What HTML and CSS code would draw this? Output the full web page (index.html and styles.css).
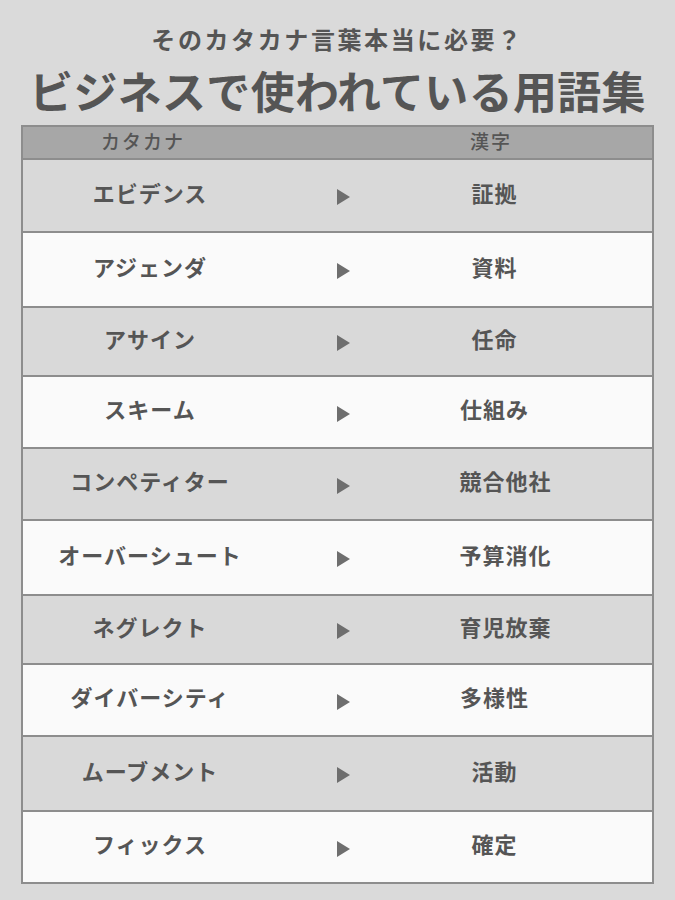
FILE: index.html
```html
<!DOCTYPE html>
<html lang="ja">
<head>
<meta charset="utf-8">
<link rel="stylesheet" href="styles.css">
</head>
<body>
<div class="page">
  <p class="sub">そのカタカナ言葉本当に必要？</p>
  <h1 class="title">ビジネスで使われている用語集</h1>
  <div class="table">
    <div class="head">
      <span class="h-kata">カタカナ</span>
      <span class="h-kanji">漢字</span>
    </div>
    <div class="row gray"><span class="kata">エビデンス</span><span class="arrow"></span><span class="kanji">証拠</span></div>
    <div class="row white"><span class="kata">アジェンダ</span><span class="arrow"></span><span class="kanji">資料</span></div>
    <div class="row gray"><span class="kata">アサイン</span><span class="arrow"></span><span class="kanji">任命</span></div>
    <div class="row white"><span class="kata">スキーム</span><span class="arrow"></span><span class="kanji">仕組み</span></div>
    <div class="row gray"><span class="kata">コンペティター</span><span class="arrow"></span><span class="kanji long">競合他社</span></div>
    <div class="row white"><span class="kata">オーバーシュート</span><span class="arrow"></span><span class="kanji long">予算消化</span></div>
    <div class="row gray"><span class="kata">ネグレクト</span><span class="arrow"></span><span class="kanji long">育児放棄</span></div>
    <div class="row white"><span class="kata">ダイバーシティ</span><span class="arrow"></span><span class="kanji">多様性</span></div>
    <div class="row gray"><span class="kata">ムーブメント</span><span class="arrow"></span><span class="kanji">活動</span></div>
    <div class="row white"><span class="kata">フィックス</span><span class="arrow"></span><span class="kanji">確定</span></div>
  </div>
</div>
</body>
</html>
```

FILE: styles.css
```css
html, body {
  margin: 0;
  padding: 0;
  background: #dadada;
}
body {
  font-family: "Noto Sans CJK JP", "Noto Sans", sans-serif;
  color: #555555;
}
.page {
  width: 675px;
  height: 900px;
  padding-top: 23px;
  box-sizing: border-box;
}
.sub {
  margin: 0;
  text-align: center;
  font-size: 24px;
  line-height: 32px;
  font-weight: 700;
  letter-spacing: 2.6px;
  color: #555;
}
.title {
  margin: 9px 0 0 0;
  text-align: center;
  font-size: 44px;
  line-height: 52px;
  font-weight: 700;
  color: #555;
  letter-spacing: 0.3px;
}
.table {
  margin: 9px 0 0 21px;
  width: 633px;
  box-sizing: border-box;
  border: 2px solid #8d8d8d;
  display: flex;
  flex-direction: column;
}
.head {
  height: 31px;
  background: #a7a7a7;
  display: grid;
  grid-template-columns: 240px 1fr;
  align-items: center;
  font-size: 19px;
  line-height: 24px;
  font-weight: 500;
  color: #555;
  letter-spacing: 2px;
  padding-bottom: 3px;
  box-sizing: border-box;
}
.h-kata {
  text-align: center;
}
.h-kanji {
  padding-left: 207px;
}
.row {
  display: grid;
  grid-template-columns: 268px 108px 1fr;
  align-items: center;
  border-top: 2px solid #8d8d8d;
  box-sizing: border-box;
  height: 73px;
  font-size: 22px;
  line-height: 28px;
  font-weight: 700;
  letter-spacing: 1px;
}
.row:nth-child(3) { height: 75px; }
.row:nth-child(4) { height: 69px; }
.row:nth-child(7) { height: 75px; }
.row:nth-child(8) { height: 69px; }
.row:nth-child(10) { height: 75px; }
.row:nth-child(5), .row:nth-child(6), .row:nth-child(9), .row:nth-child(11) { height: 72px; }
.gray { background: #d9d9d9; }
.white { background: #fafafa; }
.kata {
  text-align: center;
  padding-right: 14px;
  padding-bottom: 8px;
}
.kanji {
  text-align: center;
  padding-right: 62px;
  padding-bottom: 8px;
}
.kanji.long {
  padding-right: 40px;
}
.arrow {
  justify-self: center;
  width: 0;
  height: 0;
  border-top: 8px solid transparent;
  border-bottom: 8px solid transparent;
  border-left: 13px solid #6e6e6e;
  margin-right: 4px;
  margin-top: 3px;
}
```
